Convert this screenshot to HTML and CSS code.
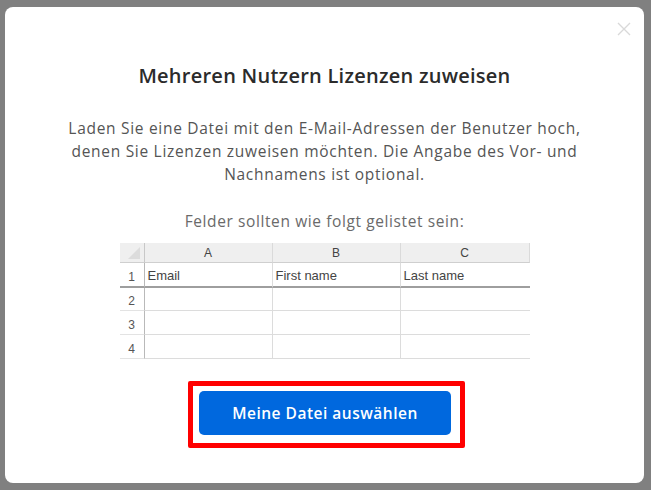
FILE: index.html
```html
<!DOCTYPE html>
<html lang="de">
<head>
  <meta charset="UTF-8" />
  <title>Lizenzen zuweisen</title>
  <link rel="stylesheet" href="styles.css">
</head>
<body>

  <div class="modal">
    <button class="btn-fermer" aria-label="Schließen">
      <svg width="14" height="14" viewBox="0 0 14 14">
        <path d="M1 1 L13 13 M13 1 L1 13" stroke="#d9d9d9" stroke-width="1.4" fill="none" />
      </svg>
    </button>

    <h1>Mehreren Nutzern Lizenzen zuweisen</h1>

    <p class="intro">
      Laden Sie eine Datei mit den E-Mail-Adressen der Benutzer hoch,<br>
      denen Sie Lizenzen zuweisen möchten. Die Angabe des Vor- und<br>
      Nachnamens ist optional.
    </p>

    <p class="felder">Felder sollten wie folgt gelistet sein:</p>

    <div class="feuille">
      <div class="coin"><span class="triangle"></span></div>
      <div class="entete">A</div>
      <div class="entete">B</div>
      <div class="entete">C</div>

      <div class="num ligne1">1</div>
      <div class="cellule ligne1">Email</div>
      <div class="cellule ligne1">First name</div>
      <div class="cellule ligne1">Last name</div>

      <div class="num">2</div>
      <div class="cellule"></div>
      <div class="cellule"></div>
      <div class="cellule"></div>

      <div class="num">3</div>
      <div class="cellule"></div>
      <div class="cellule"></div>
      <div class="cellule"></div>

      <div class="num">4</div>
      <div class="cellule"></div>
      <div class="cellule"></div>
      <div class="cellule"></div>
    </div>

    <div class="surlignage">
      <button class="btn-fichier">Meine Datei auswählen</button>
    </div>
  </div>

</body>
</html>
```

FILE: styles.css
```css
/* fond assombri derrière la fenêtre */
body {
  margin: 0;
  background-color: #808080;
  font-family: "Open Sans", "Noto Sans", sans-serif;
}

.modal {
  position: relative;
  box-sizing: border-box;
  width: 639px;
  height: 476px;
  margin: 7px 0 0 5px;
  padding-top: 55px;
  background-color: #ffffff;
  border-radius: 8px;
  display: flex;
  flex-direction: column;
  align-items: center;
  text-align: center;
}

/* croix de fermeture */
.btn-fermer {
  position: absolute;
  top: 11px;
  right: 9px;
  width: 22px;
  height: 22px;
  padding: 0;
  border: none;
  background: none;
  display: flex;
  align-items: center;
  justify-content: center;
  cursor: pointer;
}

h1 {
  margin: 0;
  font-size: 20px;
  line-height: 28px;
  font-weight: 600;
  letter-spacing: 0.25px;
  color: #2b2b2b;
}

.intro {
  margin: 27px 0 0;
  font-size: 15.5px;
  line-height: 23px;
  letter-spacing: 0.7px;
  color: #555555;
}

.felder {
  margin: 24px 0 0;
  font-size: 15.5px;
  line-height: 23px;
  letter-spacing: 0.6px;
  color: #6a6a6a;
}

/* capture type tableur */
.feuille {
  margin-top: 10px;
  display: grid;
  grid-template-columns: 25px 128px 128px 129px;
  grid-template-rows: 20px 25px 23px 24px 24px;
  font-family: "Liberation Sans", Arial, sans-serif;
  font-size: 13px;
  color: #444444;
}

.coin,
.entete {
  background-color: #efefef;
  border-right: 1px solid #dadada;
  border-bottom: 1px solid #cfcfcf;
  box-sizing: border-box;
}

.entete {
  display: flex;
  align-items: center;
  justify-content: center;
  font-size: 12px;
  padding-top: 1px;
}

.entete:last-of-type {
  border-right: none;
}

.coin {
  position: relative;
  border-right-color: #c8c8c8;
}

.triangle {
  position: absolute;
  right: 4px;
  bottom: 3px;
  width: 0;
  height: 0;
  border-left: 12px solid transparent;
  border-bottom: 12px solid #dcdcdc;
}

.num {
  box-sizing: border-box;
  border-right: 1px solid #b9b9b9;
  border-bottom: 1px solid #e3e3e3;
  display: flex;
  align-items: flex-end;
  justify-content: center;
  padding-bottom: 2px;
  font-size: 12px;
  color: #555555;
}

.cellule {
  box-sizing: border-box;
  border-right: 1px solid #dcdcdc;
  border-bottom: 1px solid #dcdcdc;
  display: flex;
  align-items: flex-end;
  padding: 0 0 3px 3px;
  text-align: left;
}

.cellule:nth-child(4n) {
  border-right: none;
}

.ligne1 {
  border-bottom: 2px solid #9e9e9e;
}

/* encadré rouge autour du bouton */
.surlignage {
  margin: 22px 0 0 4px;
  padding: 5px 9px 8px 6px;
  border: 5px solid #ff0000;
  border-radius: 2px;
}

.btn-fichier {
  width: 252px;
  height: 44px;
  border: none;
  border-radius: 5px;
  background-color: #0068de;
  color: #ffffff;
  font-family: inherit;
  font-size: 15.5px;
  font-weight: 600;
  letter-spacing: 0.5px;
  cursor: pointer;
}
```
